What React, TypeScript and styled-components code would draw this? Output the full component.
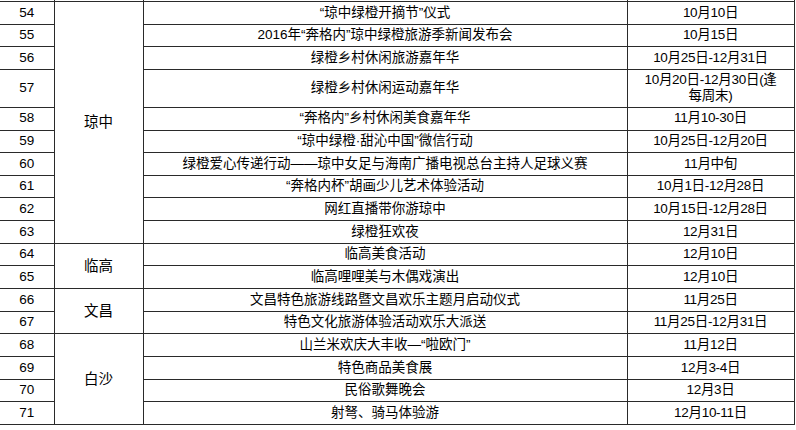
import React from "react";
import styled, { createGlobalStyle } from "styled-components";

const Global = createGlobalStyle`
  html, body { margin: 0; padding: 0; background: #ffffff; }
  body { font-family: "Liberation Sans", "Noto Sans CJK SC", sans-serif; color: #000; }
`;

const Sheet = styled.div`
  width: 796px;
  height: 430px;
  overflow: hidden;
  background: #fff;
`;

const Table = styled.table`
  border-collapse: collapse;
  table-layout: fixed;
  width: 794px;
  font-size: 13.5px;
  line-height: 16.5px;
`;

const Cell = styled.td<{ $first?: boolean; $h?: number }>`
  border: 1px solid #2a2a2a;
  ${(p) => (p.$first ? "border-left: none;" : "")}
  height: ${(p) => p.$h ?? 21.65}px;
  padding: 0 2px;
  text-align: center;
  vertical-align: middle;
  white-space: nowrap;
  overflow: hidden;
`;

const Num = styled.span`
  letter-spacing: -0.3px;
`;

const RegionCell = styled(Cell)`
  font-size: 14.5px;
`;

const StubCell = styled.td<{ $first?: boolean }>`
  height: 1px;
  padding: 0;
  border-left: ${(p) => (p.$first ? "none" : "1px solid #2a2a2a")};
  border-right: 1px solid #2a2a2a;
  border-bottom: 1px solid #2a2a2a;
`;

type Row = { n: number; name: string; date: React.ReactNode; tall?: boolean };

const groups: { region: string; rows: Row[] }[] = [
  {
    region: "琼中",
    rows: [
      { n: 54, name: "“琼中绿橙开摘节”仪式", date: "10月10日" },
      { n: 55, name: "2016年“奔格内”琼中绿橙旅游季新闻发布会", date: "10月15日" },
      { n: 56, name: "绿橙乡村休闲旅游嘉年华", date: "10月25日-12月31日" },
      {
        n: 57,
        name: "绿橙乡村休闲运动嘉年华",
        date: (
          <>
            10月20日-12月30日(逢
            <br />
            每周末)
          </>
        ),
        tall: true,
      },
      { n: 58, name: "“奔格内”乡村休闲美食嘉年华", date: "11月10-30日" },
      { n: 59, name: "“琼中绿橙·甜沁中国”微信行动", date: "10月25日-12月20日" },
      { n: 60, name: "绿橙爱心传递行动——琼中女足与海南广播电视总台主持人足球义赛", date: "11月中旬" },
      { n: 61, name: "“奔格内杯”胡画少儿艺术体验活动", date: "10月1日-12月28日" },
      { n: 62, name: "网红直播带你游琼中", date: "10月15日-12月28日" },
      { n: 63, name: "绿橙狂欢夜", date: "12月31日" },
    ],
  },
  {
    region: "临高",
    rows: [
      { n: 64, name: "临高美食活动", date: "12月10日" },
      { n: 65, name: "临高哩哩美与木偶戏演出", date: "12月10日" },
    ],
  },
  {
    region: "文昌",
    rows: [
      { n: 66, name: "文昌特色旅游线路暨文昌欢乐主题月启动仪式", date: "11月25日" },
      { n: 67, name: "特色文化旅游体验活动欢乐大派送", date: "11月25日-12月31日" },
    ],
  },
  {
    region: "白沙",
    rows: [
      { n: 68, name: "山兰米欢庆大丰收—“啦欧门”", date: "11月12日" },
      { n: 69, name: "特色商品美食展", date: "12月3-4日" },
      { n: 70, name: "民俗歌舞晚会", date: "12月3日" },
      { n: 71, name: "射弩、骑马体验游", date: "12月10-11日" },
    ],
  },
];

export default function App() {
  return (
    <Sheet>
      <Global />
      <Table>
        <colgroup>
          <col style={{ width: 54 }} />
          <col style={{ width: 89 }} />
          <col style={{ width: 484 }} />
          <col style={{ width: 167 }} />
        </colgroup>
        <tbody>
          <tr>
            <StubCell $first />
            <StubCell />
            <StubCell />
            <StubCell />
          </tr>
          {groups.map((g) =>
            g.rows.map((r, i) => (
              <tr key={r.n}>
                <Cell $first $h={r.tall ? 37 : undefined}>
                  {r.n}
                </Cell>
                {i === 0 && <RegionCell rowSpan={g.rows.length}>{g.region}</RegionCell>}
                <Cell $h={r.tall ? 37 : undefined}>{r.name}</Cell>
                <Cell $h={r.tall ? 37 : undefined}>
                  <Num>{r.date}</Num>
                </Cell>
              </tr>
            ))
          )}
        </tbody>
      </Table>
    </Sheet>
  );
}
